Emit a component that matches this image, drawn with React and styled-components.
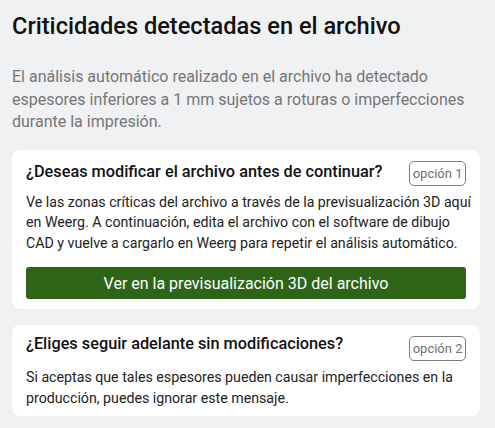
import React from 'react'
import styled, { createGlobalStyle } from 'styled-components'

const Global = createGlobalStyle`
    body {
        margin: 0;
        background: #f0f1f3;
        font-family: Roboto, "Liberation Sans", sans-serif;
    }
`;

const Page = styled.div`
    padding: 12px 15px 14px 12px;
`;

const Title = styled.h1`
    margin: 0;
    font-size: 23.6px;
    font-weight: 500;
    line-height: 28px;
    color: #111;
`;

const Intro = styled.p`
    margin: 26px 0 16px;
    font-size: 16px;
    line-height: 22.5px;
    color: #767676;
`;

const Card = styled.div`
    background: #fff;
    border-radius: 8px;
    padding: 7px 14px 8px 14px;
    margin-bottom: 16px;
`;

const Head = styled.div`
    display: flex;
    justify-content: space-between;
    align-items: flex-start;
`;

const Question = styled.h2`
    margin: 0;
    padding-top: ${p => p.$top || 0}px;
    font-size: 16.3px;
    font-weight: 500;
    line-height: 24px;
    color: #111;
`;

const Badge = styled.span`
    flex: none;
    margin-top: 4px;
    height: 23px;
    padding: 0 2.5px;
    border: 1px solid #7a7a7a;
    border-radius: 5px;
    font-size: 13px;
    line-height: 23px;
    color: #6f6f6f;
`;

const Body = styled.p`
    margin: 6px -8px 0 0;
    font-size: 14.2px;
    line-height: 20.6px;
    color: #222;
`;

const Action = styled.button`
    display: block;
    width: 100%;
    height: 32px;
    margin: 14px 0 2px;
    border: none;
    border-radius: 3px;
    background: #2e6418;
    color: #fff;
    font-family: inherit;
    font-size: 16px;
    font-weight: 400;
`;

const App = () => (
    <Page>
        <Global/>
        <Title>Criticidades detectadas en el archivo</Title>
        <Intro>
            El análisis automático realizado en el archivo ha detectado espesores inferiores a 1 mm sujetos a roturas o imperfecciones durante la impresión.
        </Intro>
        <Card>
            <Head>
                <Question $top={3}>¿Deseas modificar el archivo antes de continuar?</Question>
                <Badge>opción 1</Badge>
            </Head>
            <Body>
                Ve las zonas críticas del archivo a través de la previsualización 3D aquí en Weerg. A continuación, edita el archivo con el software de dibujo CAD y vuelve a cargarlo en Weerg para repetir el análisis automático.
            </Body>
            <Action>Ver en la previsualización 3D del archivo</Action>
        </Card>
        <Card>
            <Head>
                <Question>¿Eliges seguir adelante sin modificaciones?</Question>
                <Badge>opción 2</Badge>
            </Head>
            <Body>
                Si aceptas que tales espesores pueden causar imperfecciones en la producción, puedes ignorar este mensaje.
            </Body>
        </Card>
    </Page>
);

export default App
